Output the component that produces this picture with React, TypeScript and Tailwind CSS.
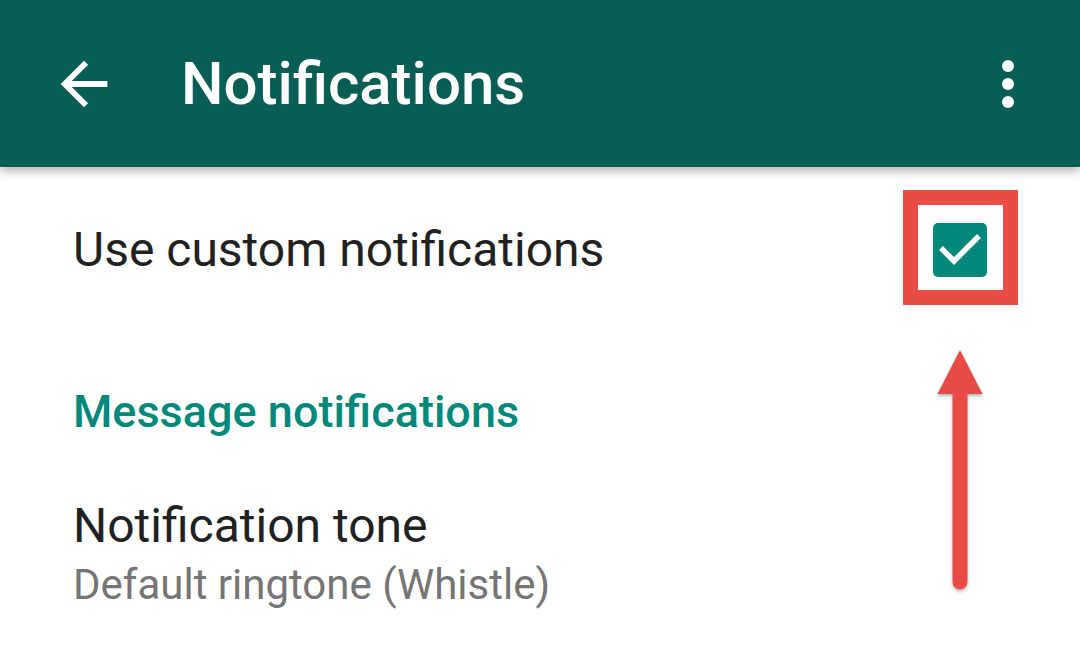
export default function App() {
  return (
    <div className="relative w-[1080px] h-[660px] overflow-hidden bg-white font-['Roboto',sans-serif]">
      {/* Toolbar */}
      <header className="relative z-10 h-[167px] bg-[#085e55] flex items-center pl-[49px] pr-[66px] shadow-[0_4px_10px_rgba(0,0,0,0.3)]">
        <svg width="70" height="70" viewBox="0 0 24 24" className="shrink-0">
          <path d="M20 11H7.83l5.59-5.59L12 4l-8 8 8 8 1.41-1.41L7.83 13H20v-2z" fill="white" />
        </svg>
        <h1 className="ml-[62px] text-white text-[60px] font-medium leading-none">Notifications</h1>
        <div className="ml-auto flex flex-col gap-[6px]">
          <span className="w-[12px] h-[12px] rounded-full bg-white" />
          <span className="w-[12px] h-[12px] rounded-full bg-white" />
          <span className="w-[12px] h-[12px] rounded-full bg-white" />
        </div>
      </header>

      {/* Settings list */}
      <div className="pl-[73px] pr-[93px]">
        <div className="h-[166px] flex items-center justify-between">
          <span className="text-[48px] text-[#212121] leading-none">Use custom notifications</span>
          <div className="w-[54px] h-[54px] rounded-[5px] bg-[#00897b]">
            <svg width="54" height="54" viewBox="0 0 54 54">
              <path d="M8 25L21 38L46 13" fill="none" stroke="white" strokeWidth="5.5" />
            </svg>
          </div>
        </div>
        <div className="pt-[56px] text-[45px] font-medium text-[#00897b] leading-none">Message notifications</div>
        <div className="pt-[64px]">
          <div className="text-[48px] text-[#212121] leading-[56px]">Notification tone</div>
          <div className="text-[42px] text-[#757575] leading-[48px] mt-[7px]">Default ringtone (Whistle)</div>
        </div>
      </div>

      {/* Annotation: highlight box */}
      <div className="absolute left-[903px] top-[190px] w-[115px] h-[115px] border-[15px] border-[#e84c45]" />

      {/* Annotation: arrow */}
      <svg className="absolute left-[930px] top-[346px]" width="60" height="250" viewBox="0 0 60 250">
        <defs>
          <filter id="sh" x="-50%" y="-10%" width="200%" height="130%">
            <feDropShadow dx="0" dy="2" stdDeviation="1.5" floodColor="#000" floodOpacity="0.3" />
          </filter>
        </defs>
        <g filter="url(#sh)" fill="#e84c45">
          <polygon points="30,4 52.5,48 7.5,48" />
          <path d="M22.5 48h15v188a7.5 7.5 0 0 1-15 0z" />
        </g>
      </svg>
    </div>
  );
}
